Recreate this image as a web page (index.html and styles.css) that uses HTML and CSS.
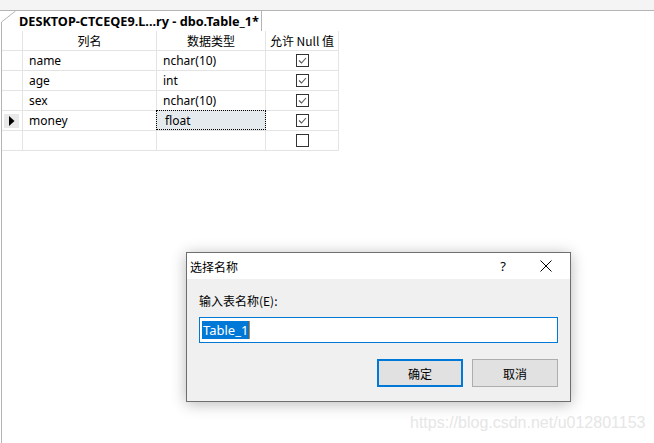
FILE: index.html
```html
<!DOCTYPE html>
<html>
<head>
<meta charset="utf-8">
<link rel="stylesheet" href="styles.css">
</head>
<body>
<div class="topbar"></div>
<div class="tabrow">
  <svg class="tabslant" width="16" height="20" viewBox="0 0 16 20"><path d="M1.5 20 V11 L15.5 0" fill="none" stroke="#b4b4b4" stroke-width="1"/></svg>
  <div class="tab">DESKTOP-CTCEQE9.L...ry - dbo.Table_1*</div>
</div>
<div class="doc">
  <div class="grid">
    <div class="cell head"></div>
    <div class="cell head center">列名</div>
    <div class="cell head center">数据类型</div>
    <div class="cell head center">允许 Null 值</div>

    <div class="cell rh"></div>
    <div class="cell">name</div>
    <div class="cell">nchar(10)</div>
    <div class="cell center"><span class="cb"><svg width="11" height="11" viewBox="0 0 11 11"><path d="M2 5.5 L4.5 8 L9 3" fill="none" stroke="#555" stroke-width="1.1"/></svg></span></div>

    <div class="cell rh"></div>
    <div class="cell">age</div>
    <div class="cell">int</div>
    <div class="cell center"><span class="cb"><svg width="11" height="11" viewBox="0 0 11 11"><path d="M2 5.5 L4.5 8 L9 3" fill="none" stroke="#555" stroke-width="1.1"/></svg></span></div>

    <div class="cell rh"></div>
    <div class="cell">sex</div>
    <div class="cell">nchar(10)</div>
    <div class="cell center"><span class="cb"><svg width="11" height="11" viewBox="0 0 11 11"><path d="M2 5.5 L4.5 8 L9 3" fill="none" stroke="#555" stroke-width="1.1"/></svg></span></div>

    <div class="cell rh"><span class="cur"><svg width="6" height="10" viewBox="0 0 6 10"><path d="M0 0 L5.5 5 L0 10 Z" fill="#000"/></svg></span></div>
    <div class="cell">money</div>
    <div class="cell focus">float</div>
    <div class="cell center"><span class="cb"><svg width="11" height="11" viewBox="0 0 11 11"><path d="M2 5.5 L4.5 8 L9 3" fill="none" stroke="#555" stroke-width="1.1"/></svg></span></div>

    <div class="cell rh"></div>
    <div class="cell"></div>
    <div class="cell"></div>
    <div class="cell center"><span class="cb"></span></div>
  </div>
</div>

<div class="dialog">
  <div class="titlebar">
    <span class="title">选择名称</span>
    <span class="help">?</span>
    <svg class="close" width="12" height="12" viewBox="0 0 12 12"><path d="M0.5 0.5 L11.5 11.5 M11.5 0.5 L0.5 11.5" stroke="#000" stroke-width="1"/></svg>
  </div>
  <div class="dbody">
    <div class="label">输入表名称(E):</div>
    <div class="input"><span class="sel">Table_1</span><span class="caret"></span></div>
    <div class="buttons">
      <div class="btn primary">确定</div>
      <div class="btn">取消</div>
    </div>
  </div>
</div>

<div class="watermark">https://blog.csdn.net/u012801153</div>
</body>
</html>
```
FILE: styles.css
```css
html, body {
  margin: 0;
  padding: 0;
  background: #fff;
  width: 654px;
  height: 443px;
  overflow: hidden;
  font-family: "Noto Sans", "Noto Sans CJK SC", sans-serif;
  font-size: 12px;
  color: #000;
}
.topbar {
  height: 10px;
  background: #f4f4f4;
  border-bottom: 1px solid #b4b4b4;
}
.tabrow {
  display: flex;
  height: 20px;
}
.tabslant {
  display: block;
  flex: none;
}
.tab {
  width: 246px;
  box-sizing: border-box;
  border-right: 1px solid #b4b4b4;
  padding-left: 3px;
  font-weight: bold;
  font-size: 12.7px;
  line-height: 20px;
  white-space: nowrap;
  letter-spacing: 0;
  overflow: hidden;
}
.doc {
  margin-left: 1px;
  border-left: 1px solid #b4b4b4;
  height: 412px;
}
.grid {
  margin-left: 0;
  display: grid;
  grid-template-columns: 21px 134px 109px 73px;
  grid-auto-rows: 20px;
  width: 337px;
}
.cell {
  box-sizing: border-box;
  border-right: 1px solid #e4e4e4;
  border-bottom: 1px solid #e4e4e4;
  padding-left: 6px;
  line-height: 19px;
  white-space: nowrap;
  display: flex;
  align-items: center;
  font-family: "Noto Sans", "Noto Sans CJK SC", sans-serif;
}
.cell.head {
  font-family: "Noto Sans CJK SC", "Noto Sans", sans-serif;
}
.cell.center {
  justify-content: center;
  padding-left: 0;
}
.cell.rh {
  padding-left: 2px;
}
.cur {
  width: 15px;
  height: 14px;
  background: #e9e9e9;
  display: flex;
  align-items: center;
  justify-content: center;
}
.cur svg { display: block; }
.cell.focus {
  position: relative;
  background: #e5eaef;
  padding-left: 8px;
}
.cell.focus::after {
  content: "";
  position: absolute;
  left: -1px;
  top: -1px;
  right: -1px;
  bottom: 0;
  border: 1px dotted #000;
}
.cb {
  width: 13px;
  height: 13px;
  box-sizing: border-box;
  border: 1px solid #333;
  background: #fff;
  display: flex;
  align-items: center;
  justify-content: center;
  margin-left: 1px;
}
.cb svg { display: block; }

.dialog {
  position: absolute;
  left: 186px;
  top: 252px;
  width: 385px;
  height: 150px;
  box-sizing: border-box;
  border: 1px solid #6e6e6e;
  background: #f0f0f0;
  box-shadow: 0 2px 14px rgba(0,0,0,0.28);
  font-family: "Noto Sans CJK SC", "Noto Sans", sans-serif;
  font-size: 12px;
}
.titlebar {
  height: 26px;
  background: #fff;
  display: flex;
  align-items: center;
  padding-left: 3px;
}
.title { flex: 1; }
.help {
  font-family: "Noto Sans", sans-serif;
  font-size: 13px;
  margin-right: 34px;
}
.close {
  display: block;
  margin-right: 18px;
}
.dbody {
  padding: 14px 12px 0 12px;
}
.label {
  line-height: 16px;
  height: 16px;
}
.input {
  margin-top: 8px;
  height: 26px;
  box-sizing: border-box;
  border: 1px solid #0078d7;
  background: #fff;
  display: flex;
  align-items: center;
  padding-left: 2px;
}
.sel {
  background: #0078d7;
  color: #fff;
  font-family: "Noto Sans", sans-serif;
  font-size: 13px;
  line-height: 18px;
  padding: 0 1px;
}
.caret {
  width: 1px;
  height: 18px;
  background: #d08030;
}
.buttons {
  margin-top: 16px;
  display: flex;
  justify-content: flex-end;
  gap: 9px;
}
.btn {
  width: 86px;
  height: 28px;
  box-sizing: border-box;
  border: 1px solid #adadad;
  background: #e1e1e1;
  display: flex;
  align-items: center;
  justify-content: center;
}
.btn.primary {
  border: 2px solid #0078d7;
}
.watermark {
  position: absolute;
  left: 410px;
  top: 414px;
  font-family: "Liberation Sans", Arial, sans-serif;
  font-size: 16px;
  color: #e6e6e6;
  white-space: nowrap;
}
```
